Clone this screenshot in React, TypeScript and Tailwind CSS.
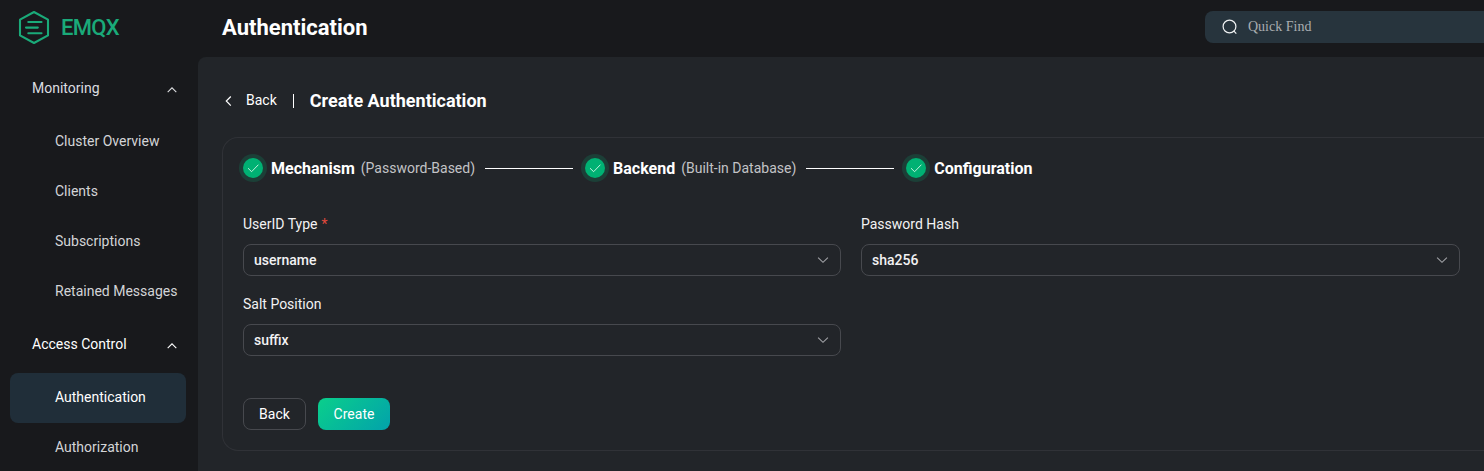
import type { ReactNode } from "react";

function Chevron({ d, className }: { d: string; className: string }) {
  return (
    <svg viewBox="0 0 12 12" width="12" height="12" fill="none" stroke="currentColor" strokeWidth="1.1" className={className}>
      <path d={d} />
    </svg>
  );
}

const UP = "M1.7 8.2 6 3.9l4.3 4.3";
const DOWN = "M1.1 3.6 6 8.3l4.9-4.7";

function Group({ title, children, active }: { title: string; children: ReactNode; active?: boolean }) {
  return (
    <div>
      <div className={active ? "flex h-14 items-center justify-between pl-8 pr-5 text-white" : "flex h-14 items-center justify-between pl-8 pr-5 text-[#dcdde0]"}>
        <span>{title}</span>
        <Chevron d={UP} className="mt-[3px]" />
      </div>
      {children}
    </div>
  );
}

function Item({ label, active }: { label: string; active?: boolean }) {
  return active ? (
    <div className="ml-2.5 mr-3 flex h-[50px] translate-y-px items-center rounded-lg bg-[#202e39] pb-0.5 pl-[45px] text-white">{label}</div>
  ) : (
    <div className="flex h-[50px] items-center pl-[55px] text-[#d3d4d7]">{label}</div>
  );
}

function Step({ title, note }: { title: string; note?: string }) {
  return (
    <div className="flex items-center">
      <span className="mr-1 flex size-7 items-center justify-center rounded-full bg-[#1c3f37]">
        <span className="flex size-5 items-center justify-center rounded-full bg-[#00b173]">
          <svg viewBox="0 0 14 14" width="14" height="14" fill="none" stroke="#d9f7ea" strokeWidth="0.9">
            <path d="M2 7.2 5.6 10.7 12.4 3.7" />
          </svg>
        </span>
      </span>
      <span className="pt-0.5 text-base leading-5 font-bold text-white">{title}</span>
      {note && <span className="ml-1.5 text-[#c2c3c6]">{note}</span>}
    </div>
  );
}

function Field({ label, value, required }: { label: string; value: string; required?: boolean }) {
  return (
    <div>
      <div className="flex h-10 items-center text-[#f2f2f3]">
        {label}
        {required && <span className="ml-1 text-[#e0493c]">*</span>}
      </div>
      <div className="flex h-8 items-center justify-between rounded-lg border border-[#47494e] pl-2.5 pr-[11px] font-medium text-[#f2f2f3]">
        <span>{value}</span>
        <Chevron d={DOWN} className="text-[#a0a2a6]" />
      </div>
    </div>
  );
}

export default function App() {
  return (
    <div className="flex h-[471px] w-full overflow-hidden bg-[#18191c] font-['Roboto',sans-serif] text-sm leading-5">
      <aside className="w-[198px] shrink-0">
        <div className="flex h-[60px] items-start pl-[18px] pt-2.5">
          <svg viewBox="0 0 32 34" width="32" height="34" fill="none" stroke="#1aaa79" strokeWidth="2.1" strokeLinecap="round" strokeLinejoin="round">
            <path d="M16 2 30 9.6V25.4L16 33 2 25.4V9.6Z" />
            <path d="M10.3 12H23.5M8 17.6h11.8M10.3 23.2H23.5" />
          </svg>
          <span className="ml-[11px] mt-1 text-[22px] font-medium leading-7 tracking-[-0.7px] text-[#1aaa79]">EMQX</span>
        </div>
        <Group title="Monitoring">
          <Item label="Cluster Overview" />
          <Item label="Clients" />
          <Item label="Subscriptions" />
          <Item label="Retained Messages" />
        </Group>
        <Group title="Access Control" active>
          <Item label="Authentication" active />
          <Item label="Authorization" />
        </Group>
      </aside>
      <div className="flex min-w-0 flex-1 flex-col">
        <header className="flex h-[57px] shrink-0 items-start justify-between pl-6">
          <h1 className="pt-3.5 text-[22px] font-bold leading-7 text-white">Authentication</h1>
          <div className="mt-[11px] flex h-8 w-[279px] items-center rounded-l-lg bg-[#27343d] pl-[17px] font-['Liberation_Serif',serif] text-[#a9adb0]">
            <svg viewBox="0 0 16 16" width="16" height="16" fill="none" stroke="#f0f2f3" strokeWidth="1.2" className="mr-2.5">
              <circle cx="7.5" cy="7.5" r="6.4" />
              <path d="m11.7 11.8 2.6 2.8" />
            </svg>
            Quick Find
          </div>
        </header>
        <main className="min-h-0 flex-1 rounded-tl-lg bg-[#222529] pl-6 pt-[30px]">
          <div className="flex h-7 items-center text-white">
            <svg viewBox="0 0 14 14" width="14" height="14" fill="none" stroke="currentColor" strokeWidth="1.2" className="mr-2.5">
              <path d="M8.8 2.5 4.3 7l4.5 4.6" />
            </svg>
            <span className="-mt-0.5">Back</span>
            <span className="ml-4 mr-4 h-3.5 w-px bg-white" />
            <h2 className="text-lg font-bold">Create Authentication</h2>
          </div>
          <section className="mt-[22px] h-[314px] rounded-l-2xl border border-r-0 border-[#303237] pl-5 pr-6">
            <div className="-ml-1 flex h-[60px] items-center">
              <Step title="Mechanism" note="(Password-Based)" />
              <span className="ml-2.5 mr-2 h-px w-[88px] bg-white" />
              <Step title="Backend" note="(Built-in Database)" />
              <span className="ml-2.5 mr-2 h-px w-[88px] bg-white" />
              <Step title="Configuration" />
            </div>
            <div className="mt-1.5 grid grid-cols-[598px_1fr] gap-x-5 gap-y-2">
              <Field label="UserID Type" value="username" required />
              <Field label="Password Hash" value="sha256" />
              <Field label="Salt Position" value="suffix" />
            </div>
            <div className="mt-[42px] flex gap-3 text-white">
              <button className="h-8 w-[63px] rounded-lg border border-[#47494e]">Back</button>
              <button className="h-8 w-[72px] rounded-lg bg-linear-[135deg,#0acf8b,#02a2ab]">Create</button>
            </div>
          </section>
        </main>
      </div>
    </div>
  );
}
